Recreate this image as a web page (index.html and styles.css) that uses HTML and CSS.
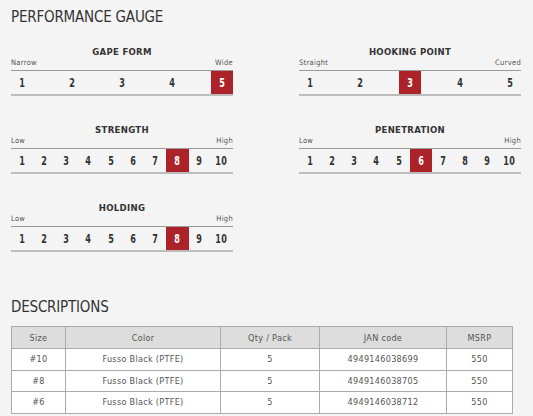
FILE: index.html
```html
<!DOCTYPE html>
<html>
<head>
<meta charset="utf-8">
<link rel="stylesheet" href="styles.css">
</head>
<body>
<div class="page">
  <h1 class="heading">PERFORMANCE GAUGE</h1>
  <div class="gauges">
    <div class="gauge">
      <div class="g-title">GAPE FORM</div>
      <div class="g-labels"><span>Narrow</span><span>Wide</span></div>
      <div class="scale">
        <span class="cell"><b>1</b></span><span class="cell"><b>2</b></span><span class="cell"><b>3</b></span><span class="cell"><b>4</b></span><span class="cell on"><b>5</b></span>
      </div>
    </div>
    <div class="gauge">
      <div class="g-title">HOOKING POINT</div>
      <div class="g-labels"><span>Straight</span><span>Curved</span></div>
      <div class="scale">
        <span class="cell"><b>1</b></span><span class="cell"><b>2</b></span><span class="cell on"><b>3</b></span><span class="cell"><b>4</b></span><span class="cell"><b>5</b></span>
      </div>
    </div>
    <div class="gauge">
      <div class="g-title">STRENGTH</div>
      <div class="g-labels"><span>Low</span><span>High</span></div>
      <div class="scale">
        <span class="cell"><b>1</b></span><span class="cell"><b>2</b></span><span class="cell"><b>3</b></span><span class="cell"><b>4</b></span><span class="cell"><b>5</b></span><span class="cell"><b>6</b></span><span class="cell"><b>7</b></span><span class="cell on"><b>8</b></span><span class="cell"><b>9</b></span><span class="cell"><b>10</b></span>
      </div>
    </div>
    <div class="gauge">
      <div class="g-title">PENETRATION</div>
      <div class="g-labels"><span>Low</span><span>High</span></div>
      <div class="scale">
        <span class="cell"><b>1</b></span><span class="cell"><b>2</b></span><span class="cell"><b>3</b></span><span class="cell"><b>4</b></span><span class="cell"><b>5</b></span><span class="cell on"><b>6</b></span><span class="cell"><b>7</b></span><span class="cell"><b>8</b></span><span class="cell"><b>9</b></span><span class="cell"><b>10</b></span>
      </div>
    </div>
    <div class="gauge">
      <div class="g-title">HOLDING</div>
      <div class="g-labels"><span>Low</span><span>High</span></div>
      <div class="scale">
        <span class="cell"><b>1</b></span><span class="cell"><b>2</b></span><span class="cell"><b>3</b></span><span class="cell"><b>4</b></span><span class="cell"><b>5</b></span><span class="cell"><b>6</b></span><span class="cell"><b>7</b></span><span class="cell on"><b>8</b></span><span class="cell"><b>9</b></span><span class="cell"><b>10</b></span>
      </div>
    </div>
  </div>

  <h2 class="heading desc">DESCRIPTIONS</h2>
  <table class="spec">
    <colgroup>
      <col class="c1"><col class="c2"><col class="c3"><col class="c4"><col class="c5">
    </colgroup>
    <thead>
      <tr><th>Size</th><th>Color</th><th>Qty / Pack</th><th>JAN code</th><th>MSRP</th></tr>
    </thead>
    <tbody>
      <tr><td>#10</td><td>Fusso Black (PTFE)</td><td>5</td><td>4949146038699</td><td>550</td></tr>
      <tr><td>#8</td><td>Fusso Black (PTFE)</td><td>5</td><td>4949146038705</td><td>550</td></tr>
      <tr><td>#6</td><td>Fusso Black (PTFE)</td><td>5</td><td>4949146038712</td><td>550</td></tr>
    </tbody>
  </table>
</div>
</body>
</html>
```

FILE: styles.css
```css
html, body {
  margin: 0;
  padding: 0;
  background: #f4f4f4;
}
body {
  font-family: "DejaVu Sans", sans-serif;
  font-stretch: condensed;
  color: #333;
}
.page {
  padding: 8px 11px 0 11px;
}
.heading {
  margin: 0;
  font-size: 15px;
  line-height: 18px;
  font-weight: normal;
  color: #333;
  letter-spacing: -0.2px;
}
.gauges {
  display: grid;
  grid-template-columns: 222px 222px;
  column-gap: 66px;
  row-gap: 28px;
  margin-top: 20px;
}
.g-title {
  text-align: center;
  font-size: 9.5px;
  line-height: 12px;
  font-weight: bold;
  letter-spacing: 0.3px;
  color: #333;
}
.g-labels {
  display: flex;
  justify-content: space-between;
  font-size: 7.5px;
  line-height: 10px;
  color: #555;
  letter-spacing: 0.3px;
  margin-bottom: 2px;
}
.scale {
  display: flex;
  justify-content: space-between;
  border-top: 1px solid #9a9a9a;
  border-bottom: 2px solid #bdbdbd;
}
.cell {
  width: 10%;
  height: 23px;
  display: flex;
  align-items: center;
  justify-content: center;
  font-size: 12.5px;
  color: #333;
}
.cell b {
  display: inline-block;
  font-weight: bold;
  transform: scaleX(0.72);
  letter-spacing: 0.5px;
}
.cell.on {
  background: #ab2329;
  color: #fff;
}
.desc {
  margin-top: 46px;
}
.spec {
  margin-top: 10px;
  width: 501px;
  border-collapse: collapse;
  table-layout: fixed;
  font-size: 9px;
  color: #555;
  border: 1px solid #a0a0a0;
}
.c1 { width: 54px; }
.c2 { width: 155px; }
.c3 { width: 99px; }
.c4 { width: 127px; }
.c5 { width: 66px; }
.spec th, .spec td {
  border: 1px solid #ababab;
  text-align: center;
  padding: 0;
  letter-spacing: 0.3px;
}
.spec th {
  background: #dddddd;
  font-weight: normal;
  height: 21px;
}
.spec td {
  background: #fff;
  height: 20.5px;
}
```
